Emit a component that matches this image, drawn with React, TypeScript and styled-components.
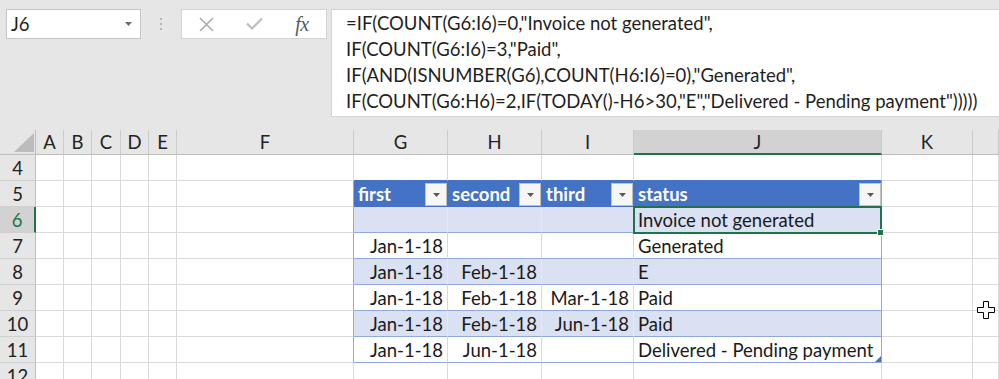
import React from "react";
import styled, { createGlobalStyle, css } from "styled-components";

const FONT = `"Lato", "Noto Sans", sans-serif`;
const GREEN = "#217346";
const GRID = "#dadada";
const HEAD_BLUE = "#4472c4";
const EDGE_BLUE = "#8ea9db";
const BAND = "#d9e1f2";

const Global = createGlobalStyle`
  html, body { margin: 0; padding: 0; background: #ffffff; }
  body { font-family: ${FONT}; overflow: hidden; }
  #root { width: 999px; height: 379px; }
`;

const Page = styled.div`
  position: relative;
  width: 999px;
  height: 379px;
  overflow: hidden;
  display: flex;
  flex-direction: column;
  background: #ffffff;
`;

/* ---------- formula bar ---------- */

const TopBar = styled.div`
  flex: none;
  height: 130px;
  box-sizing: border-box;
  padding: 9px 0 0 6px;
  background: #e6e6e6;
  display: flex;
  align-items: flex-start;
`;

const NameBox = styled.div`
  flex: none;
  width: 135px;
  height: 30px;
  box-sizing: border-box;
  background: #ffffff;
  border: 1px solid #c6c6c6;
  display: flex;
  align-items: center;
  justify-content: space-between;
  padding: 0 8px 0 4px;
  font-size: 18.5px;
  color: #1f1f1f;
`;

const Grip = styled.div`
  flex: none;
  width: 40px;
  height: 30px;
  display: flex;
  flex-direction: column;
  align-items: center;
  justify-content: center;
  gap: 3px;
`;

const GripDot = styled.span`
  width: 2px;
  height: 2px;
  border-radius: 1px;
  background: #a6a6a6;
`;

const FxButtons = styled.div`
  flex: none;
  width: 146px;
  height: 30px;
  box-sizing: border-box;
  background: #ffffff;
  border: 1px solid #d4d4d4;
  display: flex;
  padding-left: 0;
`;

const FxSlot = styled.div`
  width: 48px;
  height: 28px;
  display: flex;
  align-items: center;
  justify-content: center;
`;

const FxGlyph = styled.span`
  font-family: "Liberation Serif", "DejaVu Serif", serif;
  font-style: italic;
  font-size: 20px;
  color: #5a5a5a;
  letter-spacing: -0.5px;
  line-height: 1;
  margin-top: -1px;
`;

const FormulaBox = styled.div`
  flex: 1;
  height: 108px;
  margin-left: 4px;
  margin-right: -4px;
  box-sizing: border-box;
  background: #ffffff;
  border: 1px solid #d4d4d4;
  padding: 0 0 0 14px;
  font-size: 18.5px;
  line-height: 26px;
  color: #1f1f1f;
  white-space: pre;
`;

/* ---------- sheet ---------- */

const Sheet = styled.div`
  position: relative;
  flex: 1;
  min-height: 0;
  overflow: hidden;
  display: grid;
  grid-template-columns: 36px 28px 28px 29px 28px 28px 177px 94px 94px 92px 248px 91px 26px;
  grid-template-rows: 25px repeat(9, 26px);
  font-size: 18.5px;
  color: #1a1a1a;
`;

const Corner = styled.div`
  box-sizing: border-box;
  background: #e6e6e6;
  border-right: 1px solid #bdbdbd;
  border-bottom: 1px solid #bdbdbd;
  display: flex;
  align-items: flex-end;
  justify-content: flex-end;
  padding: 0 1px 2px 0;
`;

const ColumnHeader = styled.div<{ $selected?: boolean }>`
  box-sizing: border-box;
  background: ${(p) => (p.$selected ? "#d2d2d2" : "#e6e6e6")};
  border-right: 1px solid #cacaca;
  border-bottom: ${(p) => (p.$selected ? `2px solid ${GREEN}` : "1px solid #bdbdbd")};
  display: flex;
  align-items: center;
  justify-content: center;
  line-height: 22px;
  color: #222222;
  padding-top: ${(p) => (p.$selected ? "1px" : "0")};
`;

const RowHeader = styled.div<{ $selected?: boolean }>`
  box-sizing: border-box;
  background: ${(p) => (p.$selected ? "#d2d2d2" : "#e6e6e6")};
  border-right: ${(p) => (p.$selected ? `2px solid ${GREEN}` : "1px solid #bdbdbd")};
  border-bottom: 1px solid #d0d0d0;
  display: flex;
  align-items: flex-end;
  justify-content: center;
  padding: 0 0 1px;
  line-height: 22px;
  color: ${(p) => (p.$selected ? GREEN : "#222222")};
`;

type Fill = "none" | "head" | "band";

const Cell = styled.div<{
  $fill: Fill;
  $right: string;
  $bottom: string;
  $align: "left" | "right";
  $selected?: boolean;
  $resize?: boolean;
}>`
  position: relative;
  box-sizing: border-box;
  min-width: 0;
  white-space: nowrap;
  display: flex;
  align-items: flex-end;
  justify-content: ${(p) => (p.$align === "right" ? "flex-end" : "space-between")};
  padding: 0 4px 1px;
  line-height: 22px;
  border-right: 1px solid ${(p) => p.$right};
  border-bottom: 1px solid ${(p) => p.$bottom};
  background: ${(p) => (p.$fill === "head" ? HEAD_BLUE : p.$fill === "band" ? BAND : "#ffffff")};
  color: ${(p) => (p.$fill === "head" ? "#ffffff" : "#1a1a1a")};
  font-weight: ${(p) => (p.$fill === "head" ? 700 : 400)};
  ${(p) =>
    p.$fill === "head" &&
    css`
      padding: 0 0 0 4px;
    `}
  ${(p) =>
    p.$selected &&
    css`
      z-index: 2;
      &::before {
        content: "";
        position: absolute;
        top: -1px;
        left: -1px;
        right: -1px;
        bottom: -2px;
        border: 2px solid ${GREEN};
        pointer-events: none;
      }
      &::after {
        content: "";
        position: absolute;
        right: -3px;
        bottom: -4px;
        width: 5px;
        height: 5px;
        background: ${GREEN};
        border: 1px solid #ffffff;
      }
    `}
  ${(p) =>
    p.$resize &&
    css`
      &::after {
        content: "";
        position: absolute;
        right: 0;
        bottom: 0;
        width: 0;
        height: 0;
        border-left: 6px solid transparent;
        border-bottom: 6px solid #4a6fb5;
      }
    `}
`;

const HeadLabel = styled.span`
  padding-bottom: 1px;
`;

const FilterButton = styled.span`
  flex: none;
  width: 22px;
  height: 23px;
  box-sizing: border-box;
  border: 1px solid #bfbfbf;
  background: #f6f6f6;
  display: flex;
  align-items: center;
  justify-content: center;
`;

const Cursor = styled.svg`
  position: absolute;
  left: 977px;
  top: 171px;
  width: 18px;
  height: 18px;
  pointer-events: none;
`;

/* ---------- data ---------- */

const COLS = ["A", "B", "C", "D", "E", "F", "G", "H", "I", "J", "K", ""];

type Row = { num: number; kind: "empty" | "head" | "data"; band?: boolean; values?: string[] };

const ROWS: Row[] = [
  { num: 4, kind: "empty" },
  { num: 5, kind: "head", values: ["first", "second", "third", "status"] },
  { num: 6, kind: "data", band: true, values: ["", "", "", "Invoice not generated"] },
  { num: 7, kind: "data", values: ["Jan-1-18", "", "", "Generated"] },
  { num: 8, kind: "data", band: true, values: ["Jan-1-18", "Feb-1-18", "", "E"] },
  { num: 9, kind: "data", values: ["Jan-1-18", "Feb-1-18", "Mar-1-18", "Paid"] },
  { num: 10, kind: "data", band: true, values: ["Jan-1-18", "Feb-1-18", "Jun-1-18", "Paid"] },
  { num: 11, kind: "data", values: ["Jan-1-18", "Jun-1-18", "", "Delivered - Pending payment"] },
  { num: 12, kind: "empty" },
];

const FORMULA = [
  `=IF(COUNT(G6:I6)=0,"Invoice not generated",`,
  `IF(COUNT(G6:I6)=3,"Paid",`,
  `IF(AND(ISNUMBER(G6),COUNT(H6:I6)=0),"Generated",`,
  `IF(COUNT(G6:H6)=2,IF(TODAY()-H6>30,"E","Delivered - Pending payment")))))`,
].join("\n");

const DropTriangle = ({ color = "#595959" }: { color?: string }) => (
  <svg width="7" height="4" viewBox="0 0 7 4">
    <polygon points="0,0 7,0 3.5,4" fill={color} />
  </svg>
);

function renderRow(row: Row) {
  const inTableRow = row.num >= 5 && row.num <= 11;
  const cells: React.ReactNode[] = [];
  cells.push(
    <RowHeader key={`rh${row.num}`} $selected={row.num === 6}>
      {row.num}
    </RowHeader>
  );
  COLS.forEach((_, c) => {
    const inTable = inTableRow && c >= 6 && c <= 9;
    let right = GRID;
    let bottom = GRID;
    let fill: Fill = "none";
    if (inTableRow && (c === 5 || c === 9)) right = EDGE_BLUE;
    if (row.num === 4 && c >= 6 && c <= 9) bottom = HEAD_BLUE;
    if (inTable) {
      bottom = EDGE_BLUE;
      if (row.kind === "head") {
        fill = "head";
        bottom = HEAD_BLUE;
        if (c !== 9) right = HEAD_BLUE;
      } else if (row.band) {
        fill = "band";
        if (c !== 9) right = "#e3e8f4";
      }
    }
    const value = inTable && row.values ? row.values[c - 6] : "";
    const isStatus = c === 9;
    cells.push(
      <Cell
        key={`c${row.num}-${c}`}
        $fill={fill}
        $right={right}
        $bottom={bottom}
        $align={row.kind === "data" && !isStatus ? "right" : "left"}
        $selected={row.num === 6 && c === 9}
        $resize={row.num === 11 && c === 9}
      >
        {row.kind === "head" && inTable ? (
          <>
            <HeadLabel>{value}</HeadLabel>
            <FilterButton>
              <DropTriangle />
            </FilterButton>
          </>
        ) : (
          value
        )}
      </Cell>
    );
  });
  return cells;
}

export default function App() {
  return (
    <Page>
      <Global />
      <TopBar>
        <NameBox>
          <span>J6</span>
          <DropTriangle color="#6b6b6b" />
        </NameBox>
        <Grip>
          <GripDot />
          <GripDot />
          <GripDot />
        </Grip>
        <FxButtons>
          <FxSlot>
            <svg width="15" height="15" viewBox="0 0 15 15">
              <path d="M1 1 L14 14 M14 1 L1 14" stroke="#ababab" strokeWidth="1.6" fill="none" />
            </svg>
          </FxSlot>
          <FxSlot>
            <svg width="17" height="14" viewBox="0 0 17 14">
              <path d="M1 6.5 L6 11.5 L16 1.5" stroke="#bdbdbd" strokeWidth="2.2" fill="none" />
            </svg>
          </FxSlot>
          <FxSlot>
            <FxGlyph>fx</FxGlyph>
          </FxSlot>
        </FxButtons>
        <FormulaBox>{FORMULA}</FormulaBox>
      </TopBar>
      <Sheet>
        <Corner>
          <svg width="20" height="19" viewBox="0 0 20 19">
            <polygon points="0,19 20,0 20,19" fill="#bcbcbc" />
          </svg>
        </Corner>
        {COLS.map((col, i) => (
          <ColumnHeader key={`ch${i}`} $selected={col === "J"}>
            {col}
          </ColumnHeader>
        ))}
        {ROWS.map(renderRow)}
        <Cursor viewBox="0 0 18 18">
          <path
            d="M6.5 0.5 H11.5 V6.5 H17.5 V11.5 H11.5 V17.5 H6.5 V11.5 H0.5 V6.5 H6.5 Z"
            fill="#ffffff"
            stroke="#000000"
            strokeWidth="1"
          />
        </Cursor>
      </Sheet>
    </Page>
  );
}
